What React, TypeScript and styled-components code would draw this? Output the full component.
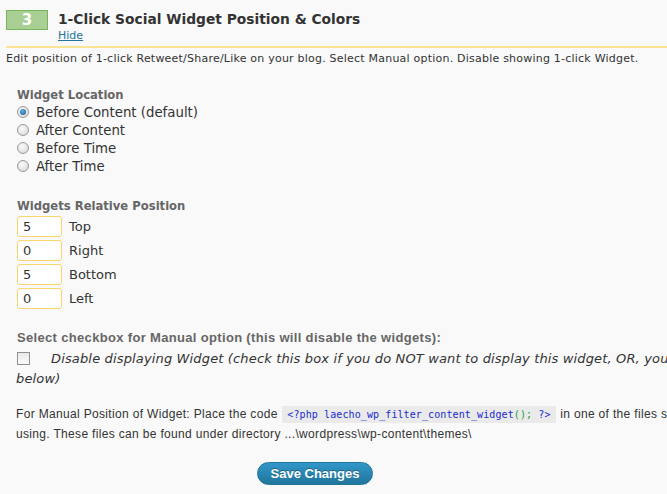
import React, { FC } from 'react';
import styled, { createGlobalStyle } from 'styled-components';

const Global = createGlobalStyle`
  html, body { margin: 0; padding: 0; background: #f9f9f9; }
  body { font-family: "DejaVu Sans", Verdana, sans-serif; color: #333; overflow: hidden; }
`;

const Page = styled.div`
  width: 667px;
  height: 494px;
  overflow: hidden;
  background: #f9f9f9;
`;

const Header = styled.div`
  display: flex;
  align-items: flex-start;
  gap: 10px;
  padding: 10px 0 0 6px;
`;

const Badge = styled.div`
  width: 40px;
  height: 18px;
  background: #a9cf95;
  border: 1px solid #79b35d;
  color: #fff;
  font: bold 15px/18px "DejaVu Sans", sans-serif;
  text-align: center;
`;

const TitleCol = styled.div`
  display: flex;
  flex-direction: column;
`;

const Title = styled.h2`
  margin: 0;
  font: bold 13.8px/18px "DejaVu Sans", sans-serif;
  color: #333;
  white-space: nowrap;
`;

const HideLink = styled.a`
  font-size: 11px;
  line-height: 14px;
  color: #21759b;
  text-decoration: underline;
  margin-top: 1px;
`;

const Rule = styled.div`
  margin: 3px 0 0 6px;
  height: 2px;
  background: #fbe592;
`;

const Intro = styled.p`
  margin: 2px 0 0 6px;
  font-size: 11px;
  letter-spacing: 0.22px;
  line-height: 18px;
  white-space: nowrap;
`;

const Section = styled.div<{ $top: number }>`
  margin: ${(p) => p.$top}px 0 0 17px;
`;

const SectionTitle = styled.div<{ $narrow?: boolean }>`
  font: ${(p) => (p.$narrow ? 'bold 13px "Liberation Sans"' : 'bold 11.6px "DejaVu Sans"')}, sans-serif;
  letter-spacing: ${(p) => (p.$narrow ? '0.33px' : '0')};
  color: #666;
  line-height: 16px;
  white-space: nowrap;
`;

const Option = styled.label`
  display: flex;
  align-items: center;
  height: 18px;
  font-size: 13.3px;
  gap: 7px;
  color: #333;
  white-space: nowrap;
`;

const Radio = styled.span<{ $on?: boolean }>`
  box-sizing: border-box;
  width: 12px;
  height: 12px;
  border-radius: 50%;
  border: 1px solid #9a9a9a;
  background: radial-gradient(circle at 40% 35%, #fafafa, #d4d4d4);
  display: flex;
  align-items: center;
  justify-content: center;
  &::after {
    content: '';
    display: ${(p) => (p.$on ? 'block' : 'none')};
    width: 6px;
    height: 6px;
    border-radius: 50%;
    background: radial-gradient(circle at 40% 35%, #5cb0e6, #14588e);
  }
`;

const FieldRow = styled.div`
  display: flex;
  align-items: center;
  gap: 7px;
  height: 24px;
  font-size: 13px;
`;

const NumInput = styled.input`
  box-sizing: border-box;
  width: 45px;
  height: 21px;
  border: 1px solid #fdd46b;
  border-radius: 3px;
  background: #fff;
  padding: 0 5px;
  font: 13px "DejaVu Sans", sans-serif;
  color: #333;
  outline: none;
`;

const CheckRow = styled.div`
  margin: 3px 0 0 -1px;
  font: italic 13px/20px "DejaVu Sans", sans-serif;
  letter-spacing: 0.15px;
  color: #333;
  white-space: nowrap;
`;

const CheckBox = styled.span`
  display: inline-block;
  box-sizing: border-box;
  width: 13px;
  height: 13px;
  border: 1px solid #8f8f8f;
  background: linear-gradient(#e9e9e9, #fafafa);
  vertical-align: -2px;
  margin: 0 21px 0 1px;
`;

const Note = styled.p`
  margin: 0 0 0 -1px;
  font: 12px/20px "Liberation Sans", sans-serif;
  letter-spacing: 0.33px;
  color: #333;
  white-space: nowrap;
`;

const Code = styled.code`
  background: #eaeaea;
  font: 10px "DejaVu Sans Mono", monospace;
  letter-spacing: 0.1px;
  color: #1b2bd0;
  padding: 3px 5px;
  margin: 0 1px;
  b { font-weight: normal; color: #1a9f2f; }
`;

const Footer = styled.div`
  display: flex;
  margin-top: 18px;
  padding-left: 240px;
`;

const SaveButton = styled.button`
  height: 23px;
  width: 116px;
  padding: 0;
  border-radius: 12px;
  border: 1px solid #21759b;
  background: linear-gradient(#3197c9, #21759b);
  color: #fff;
  font: bold 13px "Liberation Sans", sans-serif;
  text-shadow: 0 -1px 0 rgba(0, 0, 0, 0.3);
`;

const locations = ['Before Content (default)', 'After Content', 'Before Time', 'After Time'];
const positions: [string, string][] = [['5', 'Top'], ['0', 'Right'], ['5', 'Bottom'], ['0', 'Left']];

const App: FC = () => {
  return (
    <Page>
      <Global />
      <Header>
        <Badge>3</Badge>
        <TitleCol>
          <Title>1-Click Social Widget Position &amp; Colors</Title>
          <HideLink href="#">Hide</HideLink>
        </TitleCol>
      </Header>
      <Rule />
      <Intro>
        Edit position of 1-click Retweet/Share/Like on your blog. Select Manual option. Disable showing 1-click Widget.
      </Intro>

      <Section $top={19}>
        <SectionTitle>Widget Location</SectionTitle>
        {locations.map((l, i) => (
          <Option key={l}>
            <Radio $on={i === 0} />
            {l}
          </Option>
        ))}
      </Section>

      <Section $top={23}>
        <SectionTitle>Widgets Relative Position</SectionTitle>
        {positions.map(([v, l]) => (
          <FieldRow key={l}>
            <NumInput defaultValue={v} />
            {l}
          </FieldRow>
        ))}
      </Section>

      <Section $top={20}>
        <SectionTitle $narrow>Select checkbox for Manual option (this will disable the widgets):</SectionTitle>
        <CheckRow>
          <CheckBox />
          Disable displaying Widget (check this box if you do NOT want to display this widget, OR, you can place it manually, see
          <br />
          below)
        </CheckRow>
      </Section>

      <Section $top={15}>
        <Note>
          For Manual Position of Widget: Place the code{' '}
          <Code>
            &lt;?php laecho_wp_filter_content_widget<b>();</b> ?&gt;
          </Code>{' '}
          in one of the files similar to single.php or index.php of the theme you are
          <br />
          using. These files can be found under directory ...\wordpress\wp-content\themes\
        </Note>
        <Footer>
          <SaveButton>Save Changes</SaveButton>
        </Footer>
      </Section>
    </Page>
  );
};

export default App;
